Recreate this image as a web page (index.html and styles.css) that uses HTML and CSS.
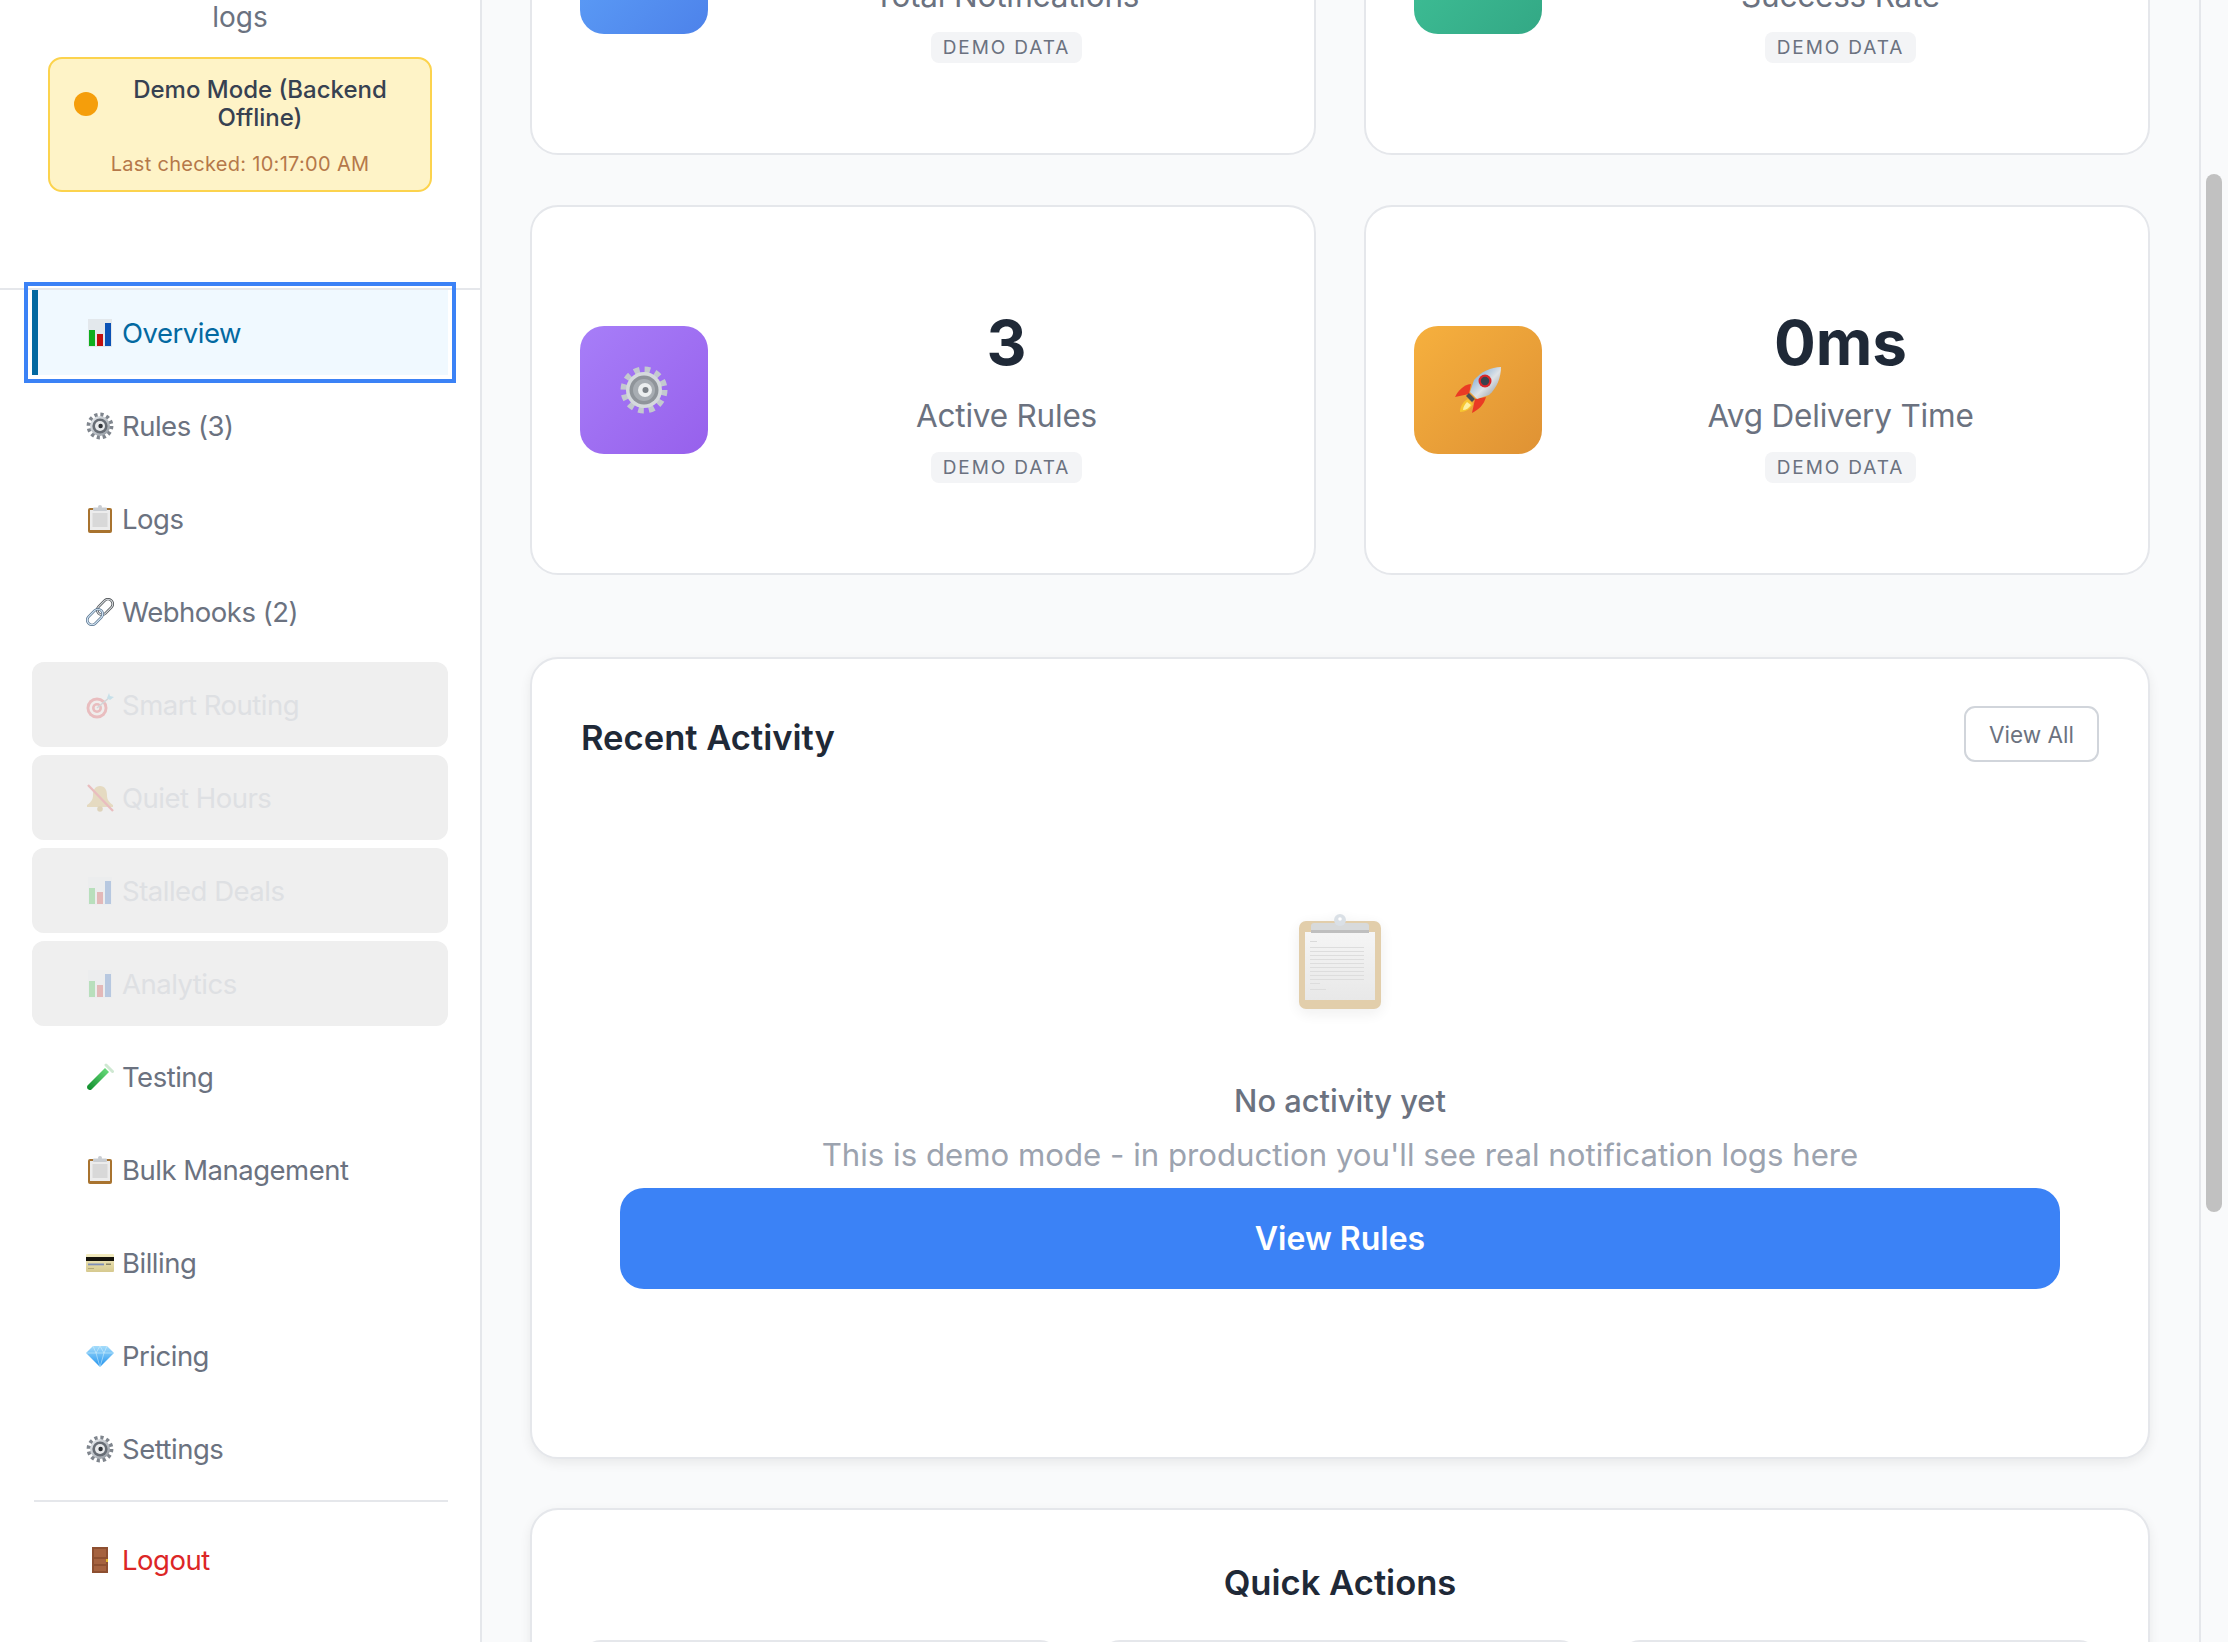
FILE: index.html
```html
<!DOCTYPE html>
<html lang="en">
<head>
<meta charset="utf-8">
<title>Dashboard</title>
<link rel="stylesheet" href="styles.css">
</head>
<body>
<svg class="defs" width="0" height="0" aria-hidden="true">
  <defs>
    <linearGradient id="gMetal" x1="0" y1="0" x2="1" y2="1"><stop offset="0" stop-color="#eef1f4"/><stop offset="1" stop-color="#8d949c"/></linearGradient>
    <linearGradient id="gTube" x1="0" y1="1" x2="1" y2="0"><stop offset="0" stop-color="#0c8a2a"/><stop offset="1" stop-color="#6ee07f"/></linearGradient>
    <linearGradient id="gGem" x1="0" y1="0" x2="0" y2="1"><stop offset="0" stop-color="#a5dcfb"/><stop offset="1" stop-color="#1f93ee"/></linearGradient>
    <linearGradient id="gCard" x1="0" y1="0" x2="0" y2="1"><stop offset="0" stop-color="#f3ecc0"/><stop offset="1" stop-color="#d6c98f"/></linearGradient>
    <linearGradient id="gBody" x1="0" y1="0" x2="1" y2="1"><stop offset="0" stop-color="#5d97d0"/><stop offset=".55" stop-color="#dfe3e7"/><stop offset="1" stop-color="#7f868e"/></linearGradient>
    <linearGradient id="gPaper" x1="0" y1="0" x2="0" y2="1"><stop offset="0" stop-color="#f4f4f4"/><stop offset="1" stop-color="#e6e6e6"/></linearGradient>
    <symbol id="i-chart" viewBox="0 0 28 28">
      <rect x="2" y="0" width="24" height="28" fill="#e3e8ec"/>
      <rect x="3" y="11" width="6" height="16" fill="#0fae1e"/>
      <rect x="11" y="15" width="6" height="12" fill="#c10f0f"/>
      <rect x="19" y="4" width="6" height="23" fill="#0b52b5"/>
    </symbol>
    <symbol id="i-gear" viewBox="0 0 28 28">
      <circle cx="14" cy="14" r="11.3" fill="none" stroke="#7f858d" stroke-width="4.2" stroke-dasharray="3.1 2.82"/>
      <circle cx="14" cy="14" r="10" fill="url(#gMetal)"/>
      <circle cx="14" cy="14" r="7.6" fill="#676d75"/>
      <circle cx="14" cy="14" r="5" fill="#e8eaec"/>
      <circle cx="14.6" cy="14" r="2.2" fill="#2f3338"/>
    </symbol>
    <symbol id="i-gear-big" viewBox="0 0 48 48">
      <circle cx="24" cy="24" r="20" fill="none" stroke="#c3c9cf" stroke-width="7" stroke-dasharray="5.5 4.97"/>
      <circle cx="24" cy="24" r="18" fill="#d5d9dd"/>
      <circle cx="24" cy="24" r="14.5" fill="#8f949a"/>
      <circle cx="24" cy="24" r="11" fill="#a8adb3"/>
      <circle cx="25" cy="24" r="7" fill="#eceef0"/>
      <circle cx="25.500" cy="24" r="3" fill="#7c8187"/>
    </symbol>
    <symbol id="i-clip" viewBox="0 0 28 28">
      <rect x="2" y="3" width="24" height="25" rx="2" fill="#a8732f"/>
      <rect x="4" y="5" width="20" height="20" fill="#ececec"/>
      <rect x="6.500" y="8" width="15" height="14" fill="#d8d8d8"/>
      <rect x="7" y="2.500" width="14" height="3.500" rx="1" fill="#c9cdd2"/>
      <circle cx="14" cy="2" r="2" fill="#c9cdd2"/>
    </symbol>
    <symbol id="i-link" viewBox="0 0 28 28">
      <g fill="none">
        <rect x="-9" y="-4.800" width="18" height="9.600" rx="4.800" transform="translate(19 9) rotate(-45)" stroke="#4e5256" stroke-width="2.600"/>
        <rect x="-9" y="-4.800" width="18" height="9.600" rx="4.800" transform="translate(19 9) rotate(-45)" stroke="#dfe3e6" stroke-width="1"/>
        <rect x="-9" y="-4.800" width="18" height="9.600" rx="4.800" transform="translate(9 19) rotate(-45)" stroke="#56718c" stroke-width="2.600"/>
        <rect x="-9" y="-4.800" width="18" height="9.600" rx="4.800" transform="translate(9 19) rotate(-45)" stroke="#d4e6f5" stroke-width="1.200"/>
      </g>
    </symbol>
    <symbol id="i-target" viewBox="0 0 28 28">
      <circle cx="11" cy="17" r="10.500" fill="#d8232a"/>
      <circle cx="11" cy="17" r="7.600" fill="#f5e9e4"/>
      <circle cx="11" cy="17" r="5" fill="#d8232a"/>
      <circle cx="11" cy="17" r="2.400" fill="#f5e9e4"/>
      <path d="M11 17 24 6" stroke="#7a8a96" stroke-width="1.600"/>
      <path d="M21 7l2-5 1 3 4 1-4 3z" fill="#4bb3d8"/>
    </symbol>
    <symbol id="i-bell" viewBox="0 0 28 28">
      <path d="M14 2c-5 0-7 4-7 9 0 5-2 7-6 10v2h26v-2c-4-3-6-5-6-10 0-5-2-9-7-9z" fill="#c69a35"/>
      <circle cx="14" cy="25" r="2.800" fill="#a97c18"/>
      <path d="M2 1 27 27" stroke="#d8232a" stroke-width="2.400"/>
    </symbol>
    <symbol id="i-tube" viewBox="0 0 28 28">
      <path d="M3.500 27C1 26.500 .5 24 1.500 22.500L19 5l4 4L5.500 26.500c-.6.500-1.200.7-2 .5z" fill="url(#gTube)"/>
      <path d="M20 2 26.500 8.500" stroke="#cfe8d2" stroke-width="3" stroke-linecap="round"/>
    </symbol>
    <symbol id="i-card" viewBox="0 0 28 18">
      <rect x="0" y="0" width="28" height="18" rx="1" fill="url(#gCard)"/>
      <rect x="0" y="3" width="28" height="4" fill="#15130c"/>
      <rect x="2" y="9.500" width="16" height="1.800" fill="#7f8fb8"/>
      <rect x="20" y="9.500" width="5" height="1.500" fill="#8b8668"/>
      <rect x="2" y="14" width="6" height="1" fill="#b3a875"/>
    </symbol>
    <symbol id="i-gem" viewBox="0 0 28 22">
      <path d="M7 1h14l7 7-14 14L0 8z" fill="url(#gGem)"/>
      <path d="M0 8h28M7 1l3 7 4 14 4-14 3-7M10 8l4-7 4 7" fill="none" stroke="#d6f0fe" stroke-width=".7" opacity=".8"/>
    </symbol>
    <symbol id="i-door" viewBox="0 0 28 28">
      <rect x="6" y="1" width="16" height="26" fill="#8d4f30"/>
      <rect x="8" y="3" width="12" height="8" fill="#a5623f"/>
      <rect x="8" y="13" width="12" height="5" fill="#a5623f"/>
      <rect x="8" y="20" width="12" height="5" fill="#a5623f"/>
      <rect x="20" y="13" width="2" height="3" fill="#e2b92e"/>
    </symbol>
    <symbol id="i-rocket" viewBox="0 0 48 48">
      <path d="M15 28 1 31c3-6 8-12 16-13z" fill="#ea3a24"/>
      <path d="M21 33 18 47c6-3 12-8 14-16z" fill="#ea3a24"/>
      <path d="M14 33c-5 2-8 8-8 13 5 0 11-3 13-8z" fill="#f7c531"/>
      <path d="M13 36c-2 2-4 5-4 8 3 0 6-2 8-5z" fill="#fdf0a0"/>
      <path d="M47 1c-10 0-20 5-27 13l-4 12 7 7 12-4C43 22 47 11 47 1z" fill="url(#gBody)"/>
      <circle cx="31" cy="15" r="6.500" fill="#d9262a"/>
      <circle cx="31" cy="15" r="4.200" fill="#39424d"/>
      <path d="M15 27l-3 3 6 6 3-3z" fill="#4b4f55"/>
    </symbol>
    <symbol id="i-board" viewBox="0 0 82 95">
      <rect x="0" y="7" width="82" height="88" rx="7" fill="#dfc9a2"/>
      <rect x="6" y="18" width="70" height="68" fill="url(#gPaper)"/>
      <rect x="11" y="27" width="7" height="1" fill="#d6d6d6"/>
      <rect x="11" y="33" width="54" height="1" fill="#dadada"/>
      <rect x="11" y="37" width="54" height="1" fill="#dadada"/>
      <rect x="11" y="41" width="54" height="1" fill="#dadada"/>
      <rect x="11" y="45" width="54" height="1" fill="#dadada"/>
      <rect x="11" y="49" width="54" height="1" fill="#dadada"/>
      <rect x="11" y="53" width="54" height="1" fill="#dadada"/>
      <rect x="11" y="57" width="54" height="1" fill="#dadada"/>
      <rect x="11" y="61" width="54" height="1" fill="#dadada"/>
      <rect x="11" y="65" width="54" height="1" fill="#dadada"/>
      <rect x="11" y="69" width="10" height="1" fill="#dadada"/>
      <rect x="11" y="75" width="16" height="1" fill="#dadada"/>
      <rect x="12" y="9" width="58" height="10" rx="3" fill="#d4d6d8"/>
      <rect x="12" y="16" width="58" height="3" fill="#b9b9b9"/>
      <circle cx="41" cy="6" r="6" fill="#d7dde4"/>
      <circle cx="41" cy="5" r="1.800" fill="#ffffff"/>
    </symbol>
  </defs>
</svg>

<div class="app">
  <aside class="sidebar">
    <header class="side-head">
      <p class="side-logs">logs</p>
      <div class="status">
        <div class="status-row">
          <span class="status-dot"></span>
          <span class="status-title">Demo Mode (Backend Offline)</span>
        </div>
        <p class="status-time">Last checked: 10:17:00 AM</p>
      </div>
    </header>
    <nav class="nav">
      <a class="nav-item active"><svg class="ni"><use href="#i-chart"/></svg><span>Overview</span></a>
      <a class="nav-item"><svg class="ni"><use href="#i-gear"/></svg><span>Rules (3)</span></a>
      <a class="nav-item"><svg class="ni"><use href="#i-clip"/></svg><span>Logs</span></a>
      <a class="nav-item"><svg class="ni"><use href="#i-link"/></svg><span>Webhooks (2)</span></a>
      <a class="nav-item off"><svg class="ni"><use href="#i-target"/></svg><span>Smart Routing</span></a>
      <a class="nav-item off"><svg class="ni"><use href="#i-bell"/></svg><span>Quiet Hours</span></a>
      <a class="nav-item off"><svg class="ni"><use href="#i-chart"/></svg><span>Stalled Deals</span></a>
      <a class="nav-item off"><svg class="ni"><use href="#i-chart"/></svg><span>Analytics</span></a>
      <a class="nav-item"><svg class="ni"><use href="#i-tube"/></svg><span>Testing</span></a>
      <a class="nav-item"><svg class="ni"><use href="#i-clip"/></svg><span>Bulk Management</span></a>
      <a class="nav-item"><svg class="ni ni-card"><use href="#i-card"/></svg><span>Billing</span></a>
      <a class="nav-item"><svg class="ni ni-gem"><use href="#i-gem"/></svg><span>Pricing</span></a>
      <a class="nav-item"><svg class="ni"><use href="#i-gear"/></svg><span>Settings</span></a>
      <div class="nav-foot">
        <a class="nav-item logout"><svg class="ni"><use href="#i-door"/></svg><span>Logout</span></a>
      </div>
    </nav>
  </aside>

  <main class="main">
    <section class="stats">
      <article class="stat">
        <div class="stat-icon blue"></div>
        <div class="stat-body">
          <div class="stat-value">0</div>
          <div class="stat-label">Total Notifications</div>
          <span class="badge">DEMO DATA</span>
        </div>
      </article>
      <article class="stat">
        <div class="stat-icon green"></div>
        <div class="stat-body">
          <div class="stat-value">0%</div>
          <div class="stat-label">Success Rate</div>
          <span class="badge">DEMO DATA</span>
        </div>
      </article>
      <article class="stat">
        <div class="stat-icon purple"><svg class="si"><use href="#i-gear-big"/></svg></div>
        <div class="stat-body">
          <div class="stat-value">3</div>
          <div class="stat-label">Active Rules</div>
          <span class="badge">DEMO DATA</span>
        </div>
      </article>
      <article class="stat">
        <div class="stat-icon orange"><svg class="si"><use href="#i-rocket"/></svg></div>
        <div class="stat-body">
          <div class="stat-value">0ms</div>
          <div class="stat-label">Avg Delivery Time</div>
          <span class="badge">DEMO DATA</span>
        </div>
      </article>
    </section>

    <section class="panel recent">
      <div class="panel-head">
        <h2 class="panel-title">Recent Activity</h2>
        <button class="btn-ghost">View All</button>
      </div>
      <div class="empty">
        <svg class="empty-icon"><use href="#i-board"/></svg>
        <p class="empty-title">No activity yet</p>
        <p class="empty-text">This is demo mode - in production you'll see real notification logs here</p>
        <button class="btn-primary">View Rules</button>
      </div>
    </section>

    <section class="panel quick">
      <h2 class="panel-title center">Quick Actions</h2>
      <div class="quick-grid">
        <div class="quick-card"></div>
        <div class="quick-card"></div>
        <div class="quick-card"></div>
      </div>
    </section>
  </main>

  <div class="scrollbar"><div class="thumb"></div></div>
</div>
</body>
</html>
```
FILE: styles.css
```css
* { box-sizing: border-box; }
html, body { margin: 0; height: 100%; overflow: hidden; }
body { font-family: Inter, "Liberation Sans", sans-serif; background: #f9fafb; color: #1f2937; }
.defs { position: absolute; }
p, h2 { margin: 0; }

.app { display: flex; height: 100vh; overflow: hidden; }

/* sidebar */
.sidebar { flex: 0 0 482px; background: #fff; border-right: 2px solid #e5e7eb; }
.side-head { display: flow-root; height: 290px; border-bottom: 2px solid #e5e7eb; }
.side-logs { margin-top: -3px; height: 40px; line-height: 40px; text-align: center; font-size: 28px; color: #6b7280; }
.status { margin: 20px 48px 0; height: 135px; padding: 17px 32px 0 24px; background: #fef3c7; border: 2px solid #fcd34d; border-radius: 14px; }
.status-row { display: flex; align-items: center; }
.status-dot { flex: 0 0 24px; height: 24px; margin-right: 24px; border-radius: 50%; background: #f59e0b; }
.status-title { flex: 1; text-align: center; font-size: 24px; line-height: 28px; font-weight: 500; color: #374151; }
.status-time { margin-top: 19px; margin-right: -8px; text-align: center; font-size: 20px; line-height: 26px; letter-spacing: .3px; color: #b5784a; }

.nav { display: flex; flex-direction: column; gap: 8px; padding: 0 32px; }
.nav-item { display: flex; align-items: center; gap: 8px; height: 85px; padding-left: 48px; border-left: 6px solid transparent; border-radius: 12px; font-size: 27.5px; letter-spacing: -.5px; color: #6b7280; }
.ni { flex: 0 0 28px; width: 28px; height: 28px; }
.ni-card { height: 18px; }
.ni-gem { height: 22px; }
.nav-item.active { color: #0369a1; background: #f0f9ff; border-left-color: #0369a1; border-radius: 0; outline: 4px solid #3b82f6; outline-offset: 4px; }
.nav-item.off { background: #efefef; border-left-color: #efefef; color: #dee0e3; }
.nav-item.off .ni { opacity: .24; }
.nav-foot { margin-top: 1px; padding-top: 18px; border-top: 2px solid #e5e7eb; margin-left: 2px; }
.nav-item.logout { color: #dc2626; padding-left: 46px; height: 80px; }

/* main */
.main { flex: 1; min-width: 0; padding: 0 49px 0 48px; background: #f9fafb; }
.stats { display: grid; grid-template-columns: 1fr 1fr; gap: 50px 48px; margin-top: -215px; margin-bottom: 82px; }
.stat { display: flex; align-items: center; height: 370px; padding: 0 48px; background: #fff; border: 2px solid #e5e7eb; border-radius: 28px; }
.stat-icon { display: flex; align-items: center; justify-content: center; flex: 0 0 128px; height: 128px; border-radius: 24px; }
.blue { background: linear-gradient(135deg, #60a5fa, #4d82ea); }
.green { background: linear-gradient(135deg, #41c59a, #33a885); }
.purple { background: linear-gradient(135deg, #a77ef8, #9760ec); }
.orange { background: linear-gradient(135deg, #f6b03e, #df9234); }
.si { width: 48px; height: 48px; }
.stat-body { flex: 1; min-width: 0; margin-left: 39px; text-align: center; }
.stat-value { height: 84px; margin-bottom: 11px; padding-top: 3px; font-size: 62px; line-height: 84px; font-weight: 700; color: #1f2937; }
.stat-label { height: 44px; margin-bottom: 14px; padding-top: 1px; font-size: 31.5px; line-height: 44px; letter-spacing: -.2px; color: #6b7280; }
.badge { display: inline-block; height: 31px; padding: 0 12px; border-radius: 8px; background: #f3f4f6; font-size: 19px; line-height: 31px; letter-spacing: 1.9px; color: #6b7280; }
.stat-body .badge { margin-top: 1px; }

.panel { background: #fff; border: 2px solid #e5e7eb; border-radius: 28px; box-shadow: 0 4px 12px rgba(0,0,0,.07); padding: 47px 49px; }
.panel-head { display: flex; align-items: center; justify-content: space-between; height: 56px; }
.panel-title { font-size: 34.6px; line-height: 46px; font-weight: 600; color: #1f2937; }
.panel-head .panel-title { margin-top: 6px; }
.panel-title.center { margin-top: 2px; text-align: center; }
.btn-ghost { width: 135px; height: 56px; background: #fff; border: 2px solid #d1d5db; border-radius: 11px; font: inherit; font-size: 22.5px; color: #6b7280; }

.recent { height: 802px; margin-bottom: 49px; }
.empty { display: flex; flex-direction: column; align-items: center; padding: 152px 39px 0; }
.empty-icon { width: 82px; height: 95px; opacity: .9; filter: drop-shadow(0 4px 8px rgba(0,0,0,.08)); }
.empty-title { margin-top: 69px; height: 44px; padding-top: 1px; font-size: 30.8px; line-height: 44px; font-weight: 500; color: #6b7280; }
.empty-text { margin-top: 10px; height: 44px; padding-top: 1px; font-size: 31.2px; line-height: 44px; color: #9ca3af; white-space: nowrap; }
.btn-primary { width: 100%; height: 101px; margin-top: 12px; background: #3b82f6; border: 0; border-radius: 24px; font: inherit; font-size: 32px; font-weight: 600; color: #fff; }

.quick { height: 300px; }
.quick-grid { display: grid; grid-template-columns: repeat(3, 1fr); gap: 40px; margin-top: 35px; }
.quick-card { height: 120px; background: #fff; border: 2px solid #e5e7eb; border-radius: 20px; }

/* scrollbar */
.scrollbar { flex: 0 0 29px; padding: 174px 6px 0 5px; background: #f9fafb; border-left: 2px solid #e5e7eb; }
.thumb { height: 1038px; background: #c1c1c1; border-radius: 8px; }
```
